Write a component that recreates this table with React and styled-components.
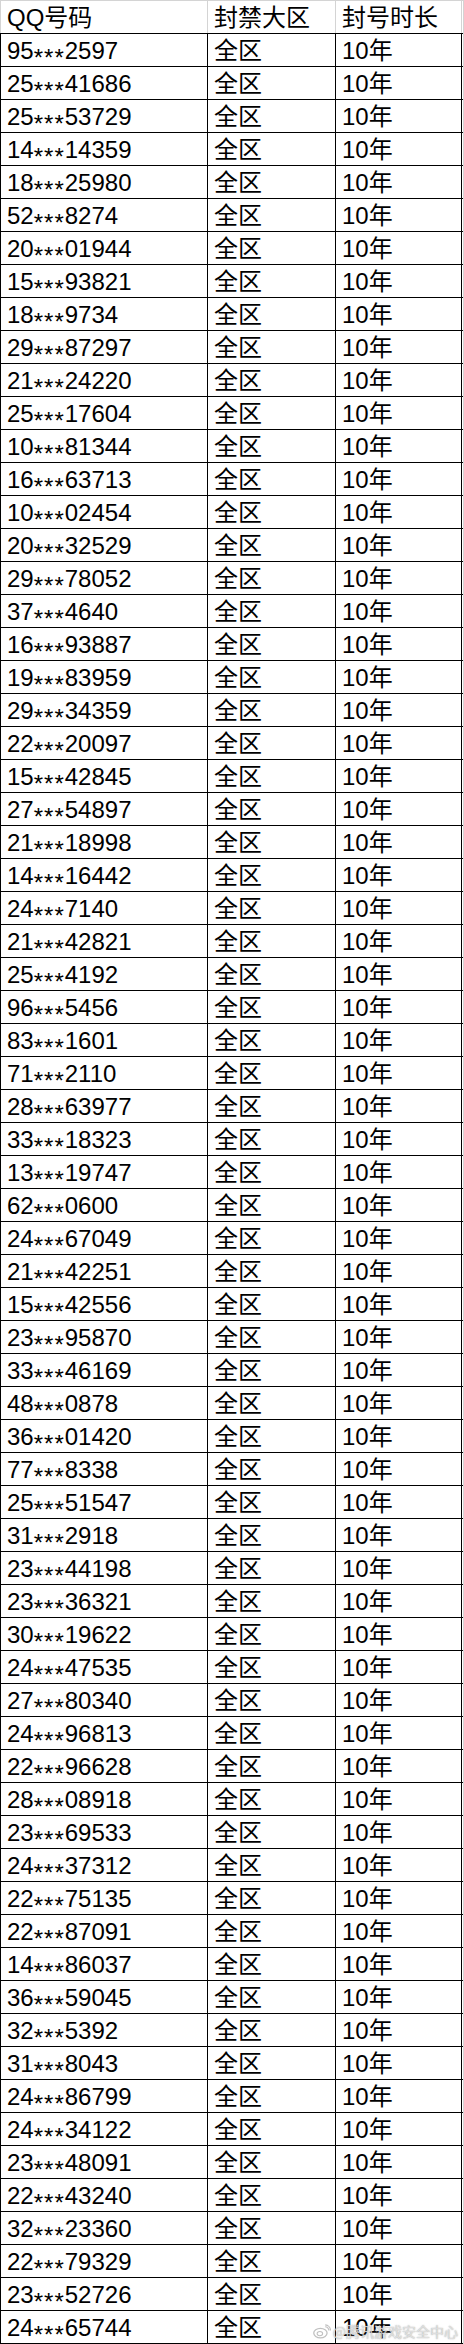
import React from "react";
import styled, { createGlobalStyle } from "styled-components";

const rows = [
  ["95", "2597"], ["25", "41686"], ["25", "53729"], ["14", "14359"], ["18", "25980"],
  ["52", "8274"], ["20", "01944"], ["15", "93821"], ["18", "9734"], ["29", "87297"],
  ["21", "24220"], ["25", "17604"], ["10", "81344"], ["16", "63713"], ["10", "02454"],
  ["20", "32529"], ["29", "78052"], ["37", "4640"], ["16", "93887"], ["19", "83959"],
  ["29", "34359"], ["22", "20097"], ["15", "42845"], ["27", "54897"], ["21", "18998"],
  ["14", "16442"], ["24", "7140"], ["21", "42821"], ["25", "4192"], ["96", "5456"],
  ["83", "1601"], ["71", "2110"], ["28", "63977"], ["33", "18323"], ["13", "19747"],
  ["62", "0600"], ["24", "67049"], ["21", "42251"], ["15", "42556"], ["23", "95870"],
  ["33", "46169"], ["48", "0878"], ["36", "01420"], ["77", "8338"], ["25", "51547"],
  ["31", "2918"], ["23", "44198"], ["23", "36321"], ["30", "19622"], ["24", "47535"],
  ["27", "80340"], ["24", "96813"], ["22", "96628"], ["28", "08918"], ["23", "69533"],
  ["24", "37312"], ["22", "75135"], ["22", "87091"], ["14", "86037"], ["36", "59045"],
  ["32", "5392"], ["31", "8043"], ["24", "86799"], ["24", "34122"], ["23", "48091"],
  ["22", "43240"], ["32", "23360"], ["22", "79329"], ["23", "52726"], ["24", "65744"],
];

const GlobalStyle = createGlobalStyle`
  html, body {
    margin: 0;
    padding: 0;
    background: #fff;
  }
  body {
    font-family: "Liberation Sans", "Noto Sans CJK SC", sans-serif;
  }
`;

const Sheet = styled.div`
  position: relative;
  width: 464px;
  height: 2344px;
  overflow: hidden;
  background: #fff;
  border-right: 1px solid #d4d4d4;
  box-sizing: border-box;
`;

const Row = styled.div`
  display: grid;
  grid-template-columns: 208px 128px 126px;
  height: ${(p) => (p.$head ? 34 : 33)}px;
  box-sizing: border-box;
  border-top: ${(p) => (p.$head ? "1px solid #d4d4d4" : "none")};
  border-bottom: 1px solid #000;
`;

const Cell = styled.div`
  display: flex;
  align-items: flex-end;
  padding: 0 0 1px 6px;
  box-sizing: border-box;
  border-right: 1px solid ${(p) => (p.$head ? "#d4d4d4" : "#000")};
  border-left: ${(p) =>
    p.$first ? `1px solid ${p.$head ? "#d4d4d4" : "#000"}` : "none"};
  font-size: 24px;
  line-height: 28px;
  color: #000;
  white-space: nowrap;
`;

const Number = styled.span`
  display: inline-block;
`;

const Stars = styled.span`
  display: inline-block;
  font-size: 24px;
  line-height: 12px;
  letter-spacing: 1px;
  transform: translateY(7px);
`;

const Watermark = styled.div`
  position: absolute;
  right: 5px;
  bottom: 5px;
  display: flex;
  align-items: center;
  gap: 2px;
  font-family: "Noto Sans CJK SC", sans-serif;
  font-size: 14px;
  line-height: 16px;
  color: rgba(235, 235, 235, 0.8);
  text-shadow: 0 0 1px rgba(120, 120, 120, 0.6), 0 0 2px rgba(160, 160, 160, 0.4);
  pointer-events: none;
`;

function WeiboLogo() {
  return (
    <svg width="18" height="15" viewBox="0 0 17 14" fill="none">
      <ellipse cx="7" cy="8.5" rx="6.3" ry="4.5" stroke="rgba(150,150,150,0.6)" strokeWidth="1.2" />
      <ellipse cx="6.5" cy="9" rx="2.6" ry="2" stroke="rgba(150,150,150,0.6)" strokeWidth="1" />
      <path d="M11.5 2.5 A3.5 3.5 0 0 1 15 6" stroke="rgba(150,150,150,0.6)" strokeWidth="1.1" />
      <path d="M11.5 0.8 A5.3 5.3 0 0 1 16.5 6" stroke="rgba(150,150,150,0.6)" strokeWidth="1.1" />
    </svg>
  );
}

export default function App() {
  return (
    <>
      <GlobalStyle />
      <Sheet>
        <Row $head>
          <Cell $head $first>QQ号码</Cell>
          <Cell $head>封禁大区</Cell>
          <Cell $head>封号时长</Cell>
        </Row>
        {rows.map(([head, tail], index) => (
          <Row key={index}>
            <Cell $first>
              <Number>
                {head}
                <Stars>***</Stars>
                {tail}
              </Number>
            </Cell>
            <Cell>全区</Cell>
            <Cell>10年</Cell>
          </Row>
        ))}
        <Watermark>
          <WeiboLogo />
          <span>@腾讯游戏安全中心</span>
        </Watermark>
      </Sheet>
    </>
  );
}
